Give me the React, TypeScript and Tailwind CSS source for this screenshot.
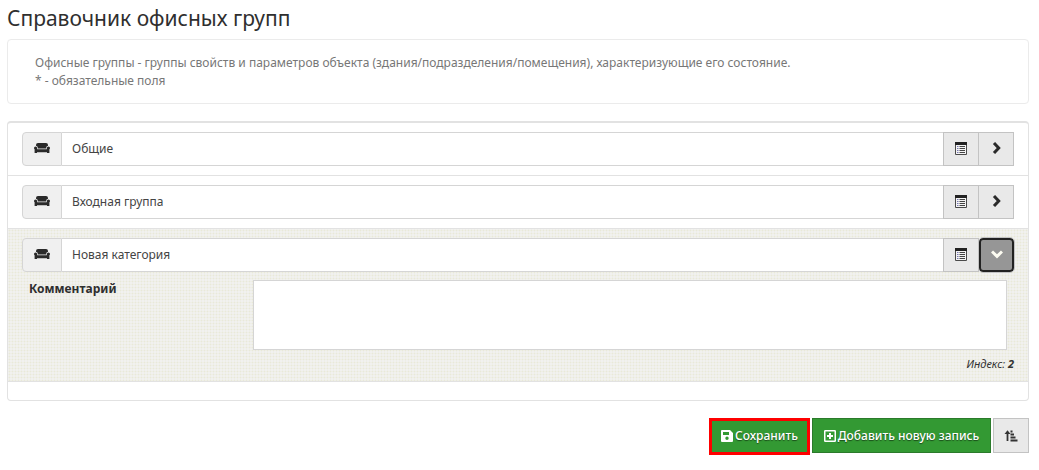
import React from "react";

function Couch() {
  return (
    <svg className="h-3 w-4" viewBox="0 0 16 12" fill="currentColor" aria-hidden="true">
      <path d="M4 1h8q2 0 2 2v.7q-1.800.2-2 2.700H4Q3.800 3.900 2 3.700V3q0-2 2-2z" />
      <path d="M1.500 4.400q1.600 0 1.700 1.600v1.200h9.600V6q.1-1.600 1.700-1.600Q16 4.500 16 5.900q0 .9-.6 1.400V11H13v-.8H3V11H.6V7.300Q0 6.800 0 5.900q0-1.400 1.500-1.500z" />
    </svg>
  );
}

function ListIcon() {
  return (
    <svg className="h-[13px] w-3" viewBox="0 0 12 13" aria-hidden="true">
      <path d="M.5.5h11v12H.5z" fill="#f4f4f4" stroke="#4a4a4a" />
      <path d="M0 0h12v3H0z" fill="#222" />
      <path d="M2 4.500h1.500M2 6.500h1.500M2 8.500h1.500M2 10.500h1.500" stroke="#7676b0" />
      <path d="M4.500 4.500H10M4.500 6.500H10M4.500 8.500H10M4.500 10.500H10" stroke="#444" />
    </svg>
  );
}

function Chevron({ open }: { open: boolean }) {
  return (
    <svg className="h-3 w-3" viewBox="0 0 12 12" fill="none" stroke="currentColor" strokeWidth="3" aria-hidden="true">
      <path d={open ? "M1 3.500 6 8.300 11 3.500" : "M4 1 8.700 6 4 11"} />
    </svg>
  );
}

function SaveIcon() {
  return (
    <svg className="h-3 w-3 shrink-0" viewBox="0 0 12 12" fill="currentColor" fillRule="evenodd" aria-hidden="true">
      <path d="M1 0h8l3 3v8q0 1-1 1H1q-1 0-1-1V1q0-1 1-1zM2 2v3h6V2zM6 6.500a1.700 1.700 0 1 0 0 3.400 1.700 1.700 0 0 0 0-3.400z" />
    </svg>
  );
}

function PlusIcon() {
  return (
    <svg className="h-3 w-3 shrink-0" viewBox="0 0 12 12" fill="none" stroke="currentColor" aria-hidden="true">
      <rect x=".75" y=".75" width="10.500" height="10.500" rx=".5" strokeWidth="1.500" />
      <path d="M6 3v6M3 6h6" strokeWidth="2" />
    </svg>
  );
}

function SortIcon() {
  return (
    <svg className="h-3 w-[14px]" viewBox="0 0 14 12" fill="none" stroke="currentColor" aria-hidden="true">
      <path d="M3.500 11V2" strokeWidth="1.800" />
      <path d="M.5 4 3.500.3 6.500 4z" fill="currentColor" stroke="none" />
      <path d="M6.500 1.500h2M6.500 4.500h3.500M6.500 7.500h5M6.500 10.500h7" strokeWidth="1.800" />
    </svg>
  );
}

const dots =
  "bg-[#f1f1ef] bg-[radial-gradient(#e9e9d8_25%,transparent_60%)] bg-[length:3px_3px]";

function Group({ name, open = false }: { name: string; open?: boolean }) {
  return (
    <div className="flex h-[34px]">
      <span className="flex w-10 items-center justify-center rounded-l border border-[#d5d5d5] bg-[#f0f0f0] pb-[2px] text-[#2a2a2a]">
        <Couch />
      </span>
      <input
        aria-label="Название группы"
        defaultValue={name}
        className="min-w-0 flex-1 border-y border-[#d5d5d5] bg-white px-[10px] text-xs text-[#444] outline-none"
      />
      <button
        type="button"
        aria-label="Свойства"
        className="flex w-9 items-center justify-center border border-[#c3c3c3] bg-[#e9e9e9] pb-[2px]"
      >
        <ListIcon />
      </button>
      {open ? (
        <button
          type="button"
          aria-label="Свернуть"
          aria-expanded="true"
          className="flex w-[35px] items-center justify-center rounded-[4px] border-2 border-[#222] bg-[#969696] pb-[2px] text-[#fdfcf2] outline outline-[#c3c3c3]"
        >
          <Chevron open />
        </button>
      ) : (
        <button
          type="button"
          aria-label="Развернуть"
          aria-expanded="false"
          className="flex w-[35px] items-center justify-center border border-l-0 border-[#c3c3c3] bg-[#e9e9e9] pb-[2px] text-[#2a2a2a]"
        >
          <Chevron open={false} />
        </button>
      )}
    </div>
  );
}

export default function App() {
  return (
    <main className="bg-white pt-1 pr-[10px] pl-[7px] font-['Noto_Sans','Open_Sans',sans-serif] text-xs text-[#333]">
      <h1 className="text-[21px] leading-7 text-[#2f2f2f]">Справочник офисных групп</h1>
      <p className="mt-[7px] rounded border border-[#ebebeb] px-[27px] pt-[14px] pb-[13px] leading-[18px] text-[#777]">
        Офисные группы - группы свойств и параметров объекта (здания/подразделения/помещения), характеризующие его
        состояние.
        <br />* - обязательные поля
      </p>
      <form onSubmit={(e) => e.preventDefault()}>
        <div className="mt-[17px] rounded-sm border border-t-2 border-[#e2e2e2] pb-[18px]">
          <section className="border-b border-[#e2e2e2] px-[14px] py-[9px]">
            <Group name="Общие" />
          </section>
          <section className="border-b border-[#e2e2e2] px-[14px] py-[9px]">
            <Group name="Входная группа" />
          </section>
          <section className={`border-b border-[#e2e2e2] px-[14px] pt-[9px] pb-2 ${dots}`}>
            <Group name="Новая категория" open />
            <div className="mt-2 flex px-[7px]">
              <label htmlFor="comment" className="w-[224px] shrink-0 leading-[18px] font-bold text-[#2f2f2f]">
                Комментарий
              </label>
              <textarea
                id="comment"
                className="block h-[70px] min-w-0 flex-1 resize-none border border-[#d5d5d5] bg-white p-2 outline-none"
              />
            </div>
            <p className="mt-[5px] text-right text-[11px] leading-[18px] italic">
              Индекс: <b>2</b>
            </p>
          </section>
        </div>
        <div className="mt-[17px] flex items-start justify-end gap-[2px] font-medium">
          <button
            type="submit"
            className="flex h-[37px] w-[101px] items-center justify-center gap-[2px] border-[3px] border-[#fe0000] bg-[#339933] pb-[2px] whitespace-nowrap text-white text-shadow-[0_1px_1px_#00000080]"
          >
            <SaveIcon />
            Сохранить
          </button>
          <button
            type="button"
            className="flex h-[35px] w-[179px] items-center justify-center gap-[2px] border border-[#2b7a2b] bg-[#339933] whitespace-nowrap text-white text-shadow-[0_1px_1px_#00000080]"
          >
            <PlusIcon />
            Добавить новую запись
          </button>
          <button
            type="button"
            aria-label="Сортировать"
            className="flex h-[35px] w-9 items-center justify-center border border-[#c3c3c3] bg-[#e9e9e9]"
          >
            <SortIcon />
          </button>
        </div>
      </form>
    </main>
  );
}
